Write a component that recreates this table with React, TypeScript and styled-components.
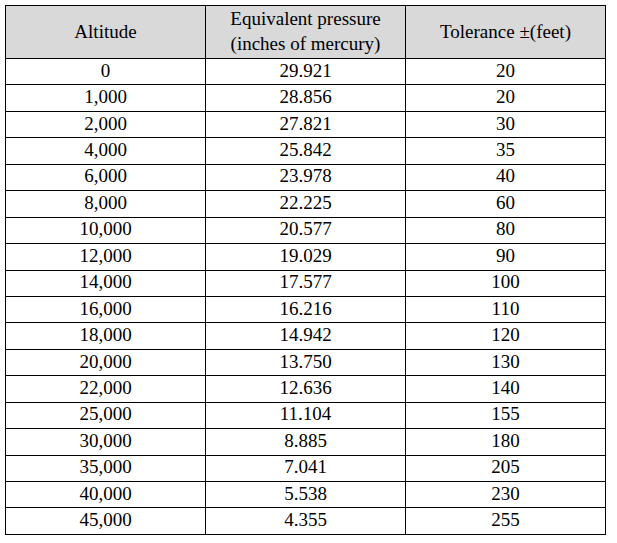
import React from 'react'
import styled, { createGlobalStyle } from 'styled-components'

const GlobalStyle = createGlobalStyle`
  html, body {
    margin: 0;
    padding: 0;
    background: #ffffff;
  }
  body {
    font-family: "Liberation Serif", "Times New Roman", serif;
    color: #000000;
  }
`

const Page = styled.div`
  padding: 5px 0 0 5px;
`

const Table = styled.table`
  border-collapse: collapse;
  width: 600px;
  table-layout: fixed;
  font-size: 19px;
`

const HeadCell = styled.th`
  background: #d9d9d9;
  border: 1px solid #000000;
  font-weight: normal;
  height: 50px;
  padding: 0 4px 2px;
  line-height: 25px;
  text-align: center;
  vertical-align: middle;
`

const Row = styled.tr`
  height: 26.45px;
`

const Cell = styled.td`
  border: 1px solid #000000;
  padding: 0 4px 2px;
  text-align: center;
  vertical-align: middle;
  line-height: 20px;
`

const rows: [string, string, string][] = [
  ['0', '29.921', '20'],
  ['1,000', '28.856', '20'],
  ['2,000', '27.821', '30'],
  ['4,000', '25.842', '35'],
  ['6,000', '23.978', '40'],
  ['8,000', '22.225', '60'],
  ['10,000', '20.577', '80'],
  ['12,000', '19.029', '90'],
  ['14,000', '17.577', '100'],
  ['16,000', '16.216', '110'],
  ['18,000', '14.942', '120'],
  ['20,000', '13.750', '130'],
  ['22,000', '12.636', '140'],
  ['25,000', '11.104', '155'],
  ['30,000', '8.885', '180'],
  ['35,000', '7.041', '205'],
  ['40,000', '5.538', '230'],
  ['45,000', '4.355', '255']
]

export default function App() {
  return (
    <Page>
      <GlobalStyle />
      <Table>
        <colgroup>
          <col style={{ width: 200 }} />
          <col style={{ width: 200 }} />
          <col style={{ width: 200 }} />
        </colgroup>
        <thead>
          <tr>
            <HeadCell>Altitude</HeadCell>
            <HeadCell>
              Equivalent pressure
              <br />
              (inches of mercury)
            </HeadCell>
            <HeadCell>Tolerance ±(feet)</HeadCell>
          </tr>
        </thead>
        <tbody>
          {rows.map(([alt, pressure, tol]) => (
            <Row key={alt}>
              <Cell>{alt}</Cell>
              <Cell>{pressure}</Cell>
              <Cell>{tol}</Cell>
            </Row>
          ))}
        </tbody>
      </Table>
    </Page>
  )
}
